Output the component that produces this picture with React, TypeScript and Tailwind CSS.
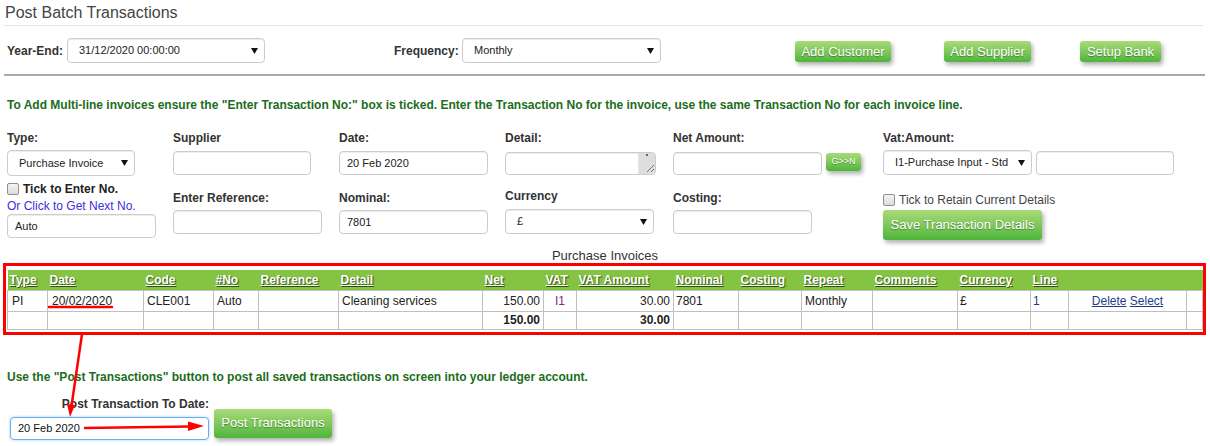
import React from "react";

const greenBtn =
  "flex items-center justify-center rounded-[3px] bg-linear-to-b from-[#a9db78] to-[#4cb53a] text-white shadow-[2px_3px_4px_rgba(0,0,0,0.3)] [text-shadow:0_1px_1px_rgba(0,0,0,0.35)]";
const inputBox =
  "border border-[#cccccc] rounded-[4px] bg-white shadow-[inset_0_1px_1px_rgba(0,0,0,0.075)] text-[11px] text-[#222] flex items-center";
const label = "h-[20px] leading-[20px] text-[12px] font-bold text-[#333]";

function Arrow() {
  return (
    <svg width="7" height="6" viewBox="0 0 7 6" className="shrink-0">
      <path d="M0 0 H7 L3.5 6 Z" fill="#111" />
    </svg>
  );
}

function Select({ text, className }: { text: string; className: string }) {
  return (
    <div className={`${inputBox} justify-between pl-[11px] pr-[6px] ${className}`}>
      <span>{text}</span>
      <Arrow />
    </div>
  );
}

function Field({ value = "", className }: { value?: string; className: string }) {
  return <div className={`${inputBox} pl-[7px] ${className}`}>{value}</div>;
}

function Checkbox() {
  return (
    <span className="inline-block h-[12px] w-[12px] shrink-0 rounded-[2px] border border-[#8f8f8f] bg-linear-to-b from-[#f4f4f4] to-[#dcdcdc]" />
  );
}

const td = "border border-[#c0c0c0] px-[3px] text-[12px] leading-[14px] text-[#222]";
const headers = [
  "Type", "Date", "Code", "#No", "Reference", "Detail", "Net", "VAT", "VAT Amount",
  "Nominal", "Costing", "Repeat", "Comments", "Currency", "Line", "", "",
];

export default function App() {
  return (
    <div className="relative h-[446px] w-[1210px] overflow-hidden bg-white font-['Liberation_Sans',Arial,sans-serif]">
      {/* Title */}
      <div className="ml-[4px] mr-[7px] h-[26px] border-b border-[#e4e4e4] pl-[1px] pt-[3px] text-[16px] leading-[20px] text-[#444]">
        Post Batch Transactions
      </div>

      {/* Year-end / frequency / buttons */}
      <div className="mt-[12px] flex h-[25px] items-center pl-[7px]">
        <div className="w-[60px] text-[12px] font-bold text-[#333]">Year-End:</div>
        <Select text="31/12/2020 00:00:00" className="h-[25px] w-[198px]" />
        <div className="ml-[129px] w-[68px] text-[12px] font-bold text-[#333]">Frequency:</div>
        <Select text="Monthly" className="h-[25px] w-[199px]" />
        <div className={`${greenBtn} ml-[134px] mt-[2px] h-[21px] w-[96px] text-[13px]`}>Add Customer</div>
        <div className={`${greenBtn} ml-[53px] mt-[2px] h-[21px] w-[87px] text-[13px]`}>Add Supplier</div>
        <div className={`${greenBtn} ml-[49px] mt-[2px] h-[21px] w-[81px] text-[13px]`}>Setup Bank</div>
      </div>

      <div className="ml-[4px] mr-[5px] mt-[11px] h-[2px] bg-[#a9a9a9]" />

      <p className="mt-[22px] pl-[7px] text-[12px] font-bold leading-[14px] text-[#1b6d1b]">
        To Add Multi-line invoices ensure the "Enter Transaction No:" box is ticked. Enter the Transaction No for the invoice, use the same Transaction No for each invoice line.
      </p>

      {/* Entry form */}
      <div className="mt-[16px] flex pl-[7px]">
        <div className="flex w-[166px] flex-col">
          <div className={label}>Type:</div>
          <Select text="Purchase Invoice" className="mt-[2px] h-[26px] w-[128px]" />
          <div className="mt-[5px] flex h-[16px] items-center gap-[4px] text-[12px] font-bold text-[#222]">
            <Checkbox />
            Tick to Enter No.
          </div>
          <div className="mt-[2px] h-[14px] text-[12px] leading-[14px] text-[#3b2fe0]">Or Click to Get Next No.</div>
          <Field value="Auto" className="mt-[1px] h-[24px] w-[149px]" />
        </div>

        <div className="flex w-[166px] flex-col">
          <div className={label}>Supplier</div>
          <Field className="mt-[3px] h-[24px] w-[138px]" />
          <div className={`${label} mt-[13px]`}>Enter Reference:</div>
          <Field className="mt-[2px] h-[24px] w-[149px]" />
        </div>

        <div className="flex w-[166px] flex-col">
          <div className={label}>Date:</div>
          <Field value="20 Feb 2020" className="mt-[3px] h-[24px] w-[149px]" />
          <div className={`${label} mt-[13px]`}>Nominal:</div>
          <Field value="7801" className="mt-[2px] h-[24px] w-[149px]" />
        </div>

        <div className="flex w-[168px] flex-col">
          <div className={label}>Detail:</div>
          <div className={`${inputBox} relative mt-[4px] h-[23px] w-[151px] overflow-hidden`}>
            <div className="absolute right-0 top-0 flex h-full w-[17px] flex-col items-center justify-between border-l border-[#e4e4e4] bg-[#dedede] pb-[1px] pt-[1px]">
              <span className="h-[2px] w-[2px] bg-[#666]" />
              <svg width="9" height="9" viewBox="0 0 9 9" className="self-end">
                <path d="M8 1 L1 8 M8 5 L5 8" stroke="#777" strokeWidth="1" />
              </svg>
            </div>
          </div>
          <div className={`${label} mt-[11px]`}>Currency</div>
          <Select text="£" className="mt-[3px] h-[25px] w-[149px]" />
        </div>

        <div className="flex w-[210px] flex-col">
          <div className={label}>Net Amount:</div>
          <div className="mt-[4px] flex items-start">
            <Field className="h-[23px] w-[149px]" />
            <div className={`${greenBtn} ml-[4px] mt-[1px] h-[18px] w-[35px] text-[9px]`}>G&gt;&gt;N</div>
          </div>
          <div className={`${label} mt-[13px]`}>Costing:</div>
          <Field className="mt-[2px] h-[24px] w-[139px]" />
        </div>

        <div className="flex flex-col">
          <div className={label}>Vat:Amount:</div>
          <div className="mt-[2px] flex items-start gap-[4px]">
            <Select text="I1-Purchase Input - Std" className="h-[25px] w-[149px]" />
            <Field className="mt-[1px] h-[24px] w-[138px]" />
          </div>
          <div className="mt-[17px] flex h-[16px] items-center gap-[4px] text-[12px] text-[#444]">
            <Checkbox />
            Tick to Retain Current Details
          </div>
          <div className={`${greenBtn} mt-[2px] h-[30px] w-[159px] text-[13px]`}>Save Transaction Details</div>
        </div>
      </div>

      {/* Saved lines */}
      <div className="mt-[9px] h-[14px] text-center text-[13px] leading-[14px] text-[#333]">Purchase Invoices</div>
      <div className="ml-[3px] w-[1203px] border-[3px] border-[#ff0000] pb-[2px] pl-[1px] pt-[4px]">
        <table className="w-[1195px] table-fixed border-collapse">
          <colgroup>
            <col className="w-[40px]" />
            <col className="w-[96px]" />
            <col className="w-[70px]" />
            <col className="w-[45px]" />
            <col className="w-[80px]" />
            <col className="w-[144px]" />
            <col className="w-[61px]" />
            <col className="w-[33px]" />
            <col className="w-[97px]" />
            <col className="w-[65px]" />
            <col className="w-[63px]" />
            <col className="w-[71px]" />
            <col className="w-[85px]" />
            <col className="w-[73px]" />
            <col className="w-[38px]" />
            <col className="w-[118px]" />
            <col className="w-[16px]" />
          </colgroup>
          <thead>
            <tr className="h-[20px] bg-[#84c442]">
              {headers.map((h, i) => (
                <th
                  key={i}
                  className="px-[2px] text-left text-[12px] font-bold leading-[14px] text-white underline [text-shadow:1px_1px_1px_#2f4f1a]"
                >
                  {h}
                </th>
              ))}
            </tr>
          </thead>
          <tbody>
            <tr className="h-[21px]">
              <td className={`${td} pl-[4px]`}>PI</td>
              <td className={`${td} pl-[4px]`}>20/02/2020</td>
              <td className={td}>CLE001</td>
              <td className={td}>Auto</td>
              <td className={td} />
              <td className={td}>Cleaning services</td>
              <td className={`${td} text-right`}>150.00</td>
              <td className={`${td} text-center`}>
                <span className="text-[#8a2580]">I1</span>
              </td>
              <td className={`${td} text-right`}>30.00</td>
              <td className={`${td} pl-[2px]`}>7801</td>
              <td className={td} />
              <td className={td}>Monthly</td>
              <td className={td} />
              <td className={`${td} pl-[2px]`}>£</td>
              <td className={`${td} pl-[2px]`}>
                <span className="text-[#1f3a82]">1</span>
              </td>
              <td className={`${td} text-center`}>
                <span className="text-[#1f3c88] underline">Delete</span>{" "}
                <span className="text-[#1f3c88] underline">Select</span>
              </td>
              <td className={td} />
            </tr>
            <tr className="h-[18px]">
              <td className={td} />
              <td className={td} />
              <td className={td} />
              <td className={td} />
              <td className={td} />
              <td className={td} />
              <td className={`${td} text-right font-bold`}>150.00</td>
              <td className={td} />
              <td className={`${td} text-right font-bold`}>30.00</td>
              <td className={td} />
              <td className={td} />
              <td className={td} />
              <td className={td} />
              <td className={td} />
              <td className={td} />
              <td className={td} />
              <td className={td} />
            </tr>
          </tbody>
        </table>
      </div>

      <p className="mt-[35px] pl-[7px] text-[12px] font-bold leading-[14px] text-[#1b6d1b]">
        Use the "Post Transactions" button to post all saved transactions on screen into your ledger account.
      </p>

      <div className="mt-[13px] flex items-end pl-[10px]">
        <div className="flex w-[199px] flex-col">
          <div className="h-[14px] text-right text-[12px] font-bold leading-[14px] text-[#333]">Post Transaction To Date:</div>
          <div className="mt-[6px] flex h-[23px] items-center rounded-[4px] border border-[#66afe9] pl-[7px] text-[11px] text-[#111] shadow-[0_0_3px_rgba(102,175,233,0.6)]">
            20 Feb 2020
          </div>
        </div>
        <div className={`${greenBtn} mb-[2px] ml-[5px] h-[29px] w-[118px] text-[13px]`}>Post Transactions</div>
      </div>

      {/* Red annotation marks */}
      <svg className="pointer-events-none absolute left-0 top-0" width="1210" height="446">
        <line x1="49" y1="307" x2="112" y2="307" stroke="#ff0000" strokeWidth="2.5" strokeLinecap="round" />
        <line x1="82" y1="334" x2="71.5" y2="406" stroke="#ff0000" strokeWidth="2.5" />
        <path d="M70 417 L67 404 L75 405 Z" fill="#ff0000" />
        <line x1="84" y1="428" x2="190" y2="426.5" stroke="#ff0000" strokeWidth="2.5" />
        <path d="M204 426 L188 421.5 L188 431 Z" fill="#ff0000" />
      </svg>
    </div>
  );
}
